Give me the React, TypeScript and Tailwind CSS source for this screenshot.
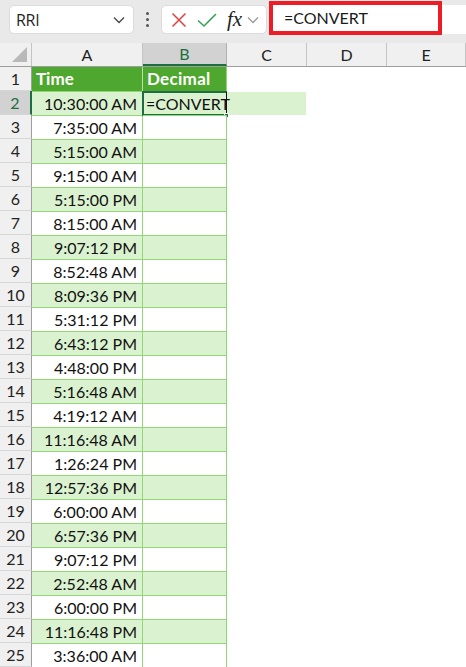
import React from "react"

const times = [
  "10:30:00 AM",
  "7:35:00 AM",
  "5:15:00 AM",
  "9:15:00 AM",
  "5:15:00 PM",
  "8:15:00 AM",
  "9:07:12 PM",
  "8:52:48 AM",
  "8:09:36 PM",
  "5:31:12 PM",
  "6:43:12 PM",
  "4:48:00 PM",
  "5:16:48 AM",
  "4:19:12 AM",
  "11:16:48 AM",
  "1:26:24 PM",
  "12:57:36 PM",
  "6:00:00 AM",
  "6:57:36 PM",
  "9:07:12 PM",
  "2:52:48 AM",
  "6:00:00 PM",
  "11:16:48 PM",
  "3:36:00 AM",
]

function Chevron({ className }: { className?: string }) {
  return (
    <svg width="12" height="8" viewBox="0 0 12 8" className={className}>
      <path d="M1 1.5 L6 6.5 L11 1.5" fill="none" stroke="currentColor" strokeWidth="1.3" />
    </svg>
  )
}

function Toolbar() {
  return (
    <div className="flex h-[43px] items-start bg-[#e9e9e9]">
      <div className="ml-[9px] mt-[5px] flex h-[29px] w-[125px] items-center justify-between rounded-[5px] border border-[#dcdcdc] bg-white pl-[6px] pr-[8px]">
        <span className="text-[16px] text-[#1f1f1f] font-['Open_Sans',sans-serif] tracking-[-0.3px]">RRI</span>
        <Chevron className="text-[#444]" />
      </div>
      <div className="mt-[12px] flex w-[27px] flex-col items-center gap-[3px]">
        <span className="h-[3px] w-[3px] rounded-full bg-[#555]" />
        <span className="h-[3px] w-[3px] rounded-full bg-[#555]" />
        <span className="h-[3px] w-[3px] rounded-full bg-[#555]" />
      </div>
      <div className="mt-[5px] flex h-[29px] w-[106px] items-center rounded-[5px] border border-[#dcdcdc] bg-white">
        <svg width="16" height="16" viewBox="0 0 16 16" className="ml-[9px]">
          <path d="M1.5 1.5 L14.5 14.5 M14.5 1.5 L1.5 14.5" stroke="#e0403f" strokeWidth="1.5" fill="none" />
        </svg>
        <svg width="20" height="16" viewBox="0 0 20 16" className="ml-[10px]">
          <path d="M1 8.5 L7 14 L19 2" stroke="#37a356" strokeWidth="1.6" fill="none" />
        </svg>
        <span className="ml-[10px] text-[21px] italic text-[#222] font-['Liberation_Serif',serif] leading-none">fx</span>
        <Chevron className="ml-[5px] text-[#9a9a9a]" />
      </div>
      <div className="ml-[2px] mt-[1px] flex h-[34px] w-[173px] items-center border-[4px] border-[#ee1c24] bg-white pl-[11px]">
        <span className="text-[16px] text-[#1a1a1a] font-['Lato',sans-serif]">=CONVERT</span>
      </div>
      <div className="mt-[5px] h-[29px] flex-1 bg-white" />
    </div>
  )
}

function HeaderRow() {
  const cols = [
    { l: "A", w: "w-[111px]", sel: false },
    { l: "B", w: "w-[84px]", sel: true },
    { l: "C", w: "w-[80px]", sel: false },
    { l: "D", w: "w-[80px]", sel: false },
    { l: "E", w: "w-[79px]", sel: false },
  ]
  return (
    <div className="flex h-[24px] border-b border-[#9e9e9e] bg-[#f0f0f0]">
      <div className="relative w-[32px] border-r border-[#c4c4c4]">
        <div className="absolute bottom-[4px] right-[4px] h-0 w-0 border-b-[15px] border-l-[15px] border-b-[#b9b9b9] border-l-transparent" />
      </div>
      {cols.map(c => (
        <div
          key={c.l}
          className={
            c.sel
              ? `${c.w} flex items-center justify-center border-r border-[#b0b0b0] border-b-2 border-b-[#1e6e42] bg-[#d2d2d2] text-[16px] text-[#1e6e42]`
              : `${c.w} flex items-center justify-center border-r border-[#c4c4c4] text-[16px] text-[#222]`
          }
        >
          {c.l}
        </div>
      ))}
    </div>
  )
}

export default function App() {
  return (
    <div className="h-[667px] w-[466px] overflow-hidden bg-white font-['Lato',sans-serif]">
      <Toolbar />
      <HeaderRow />

      {/* row 1: table header */}
      <div className="flex h-[24px]">
        <div className="flex w-[32px] items-center justify-center border-b border-r border-[#9e9e9e] border-b-[#d6d6d6] bg-[#f0f0f0] text-[16px] text-[#222]">
          1
        </div>
        <div className="flex w-[111px] items-center border-r border-[#b6e39f] bg-[#4ea72e] pl-[4px] text-[17px] font-bold text-white">
          Time
        </div>
        <div className="flex w-[84px] items-center border-r border-[#8ed973] bg-[#4ea72e] pl-[4px] text-[17px] font-bold tracking-[0.3px] text-white">
          Decimal
        </div>
      </div>

      {times.map((t, i) => {
        const n = i + 2
        const shaded = n % 2 === 0
        const active = n === 2
        return (
          <div key={n} className="flex h-[24px]">
            <div
              className={
                active
                  ? "flex w-[32px] items-center justify-center border-b border-r-2 border-b-[#d6d6d6] border-r-[#1e6e42] bg-[#d2d2d2] text-[16px] text-[#1e6e42]"
                  : "flex w-[32px] items-center justify-center border-b border-r border-b-[#d6d6d6] border-r-[#9e9e9e] bg-[#f0f0f0] text-[16px] text-[#222]"
              }
            >
              {n}
            </div>
            <div
              className={`flex w-[111px] items-center justify-end border-r border-t border-[#8ed973] pr-[5px] text-[16px] text-[#111] ${
                shaded ? "bg-[#daf2d0]" : "bg-white"
              }`}
            >
              {t}
            </div>
            <div
              className={`relative flex w-[84px] items-center border-r border-t border-[#8ed973] pl-[3px] text-[16px] text-[#111] ${
                shaded ? "bg-[#daf2d0]" : "bg-white"
              }`}
            >
              {active && (
                <>
                  <span>=CONVERT</span>
                  <div className="absolute inset-x-[-1px] bottom-[-1px] top-[-1px] border-2 border-r-0 border-[#1e6e42]" />
                  <div className="absolute bottom-[1px] right-[-1px] top-0 w-[1.5px] bg-[#111]" />
                  <div className="absolute bottom-[-3px] right-[-3px] h-[5px] w-[5px] border border-white bg-[#1e6e42]" />
                </>
              )}
            </div>
            {active && <div className="mt-[1px] w-[79px] bg-[#daf2d0]" />}
          </div>
        )
      })}
    </div>
  )
}
